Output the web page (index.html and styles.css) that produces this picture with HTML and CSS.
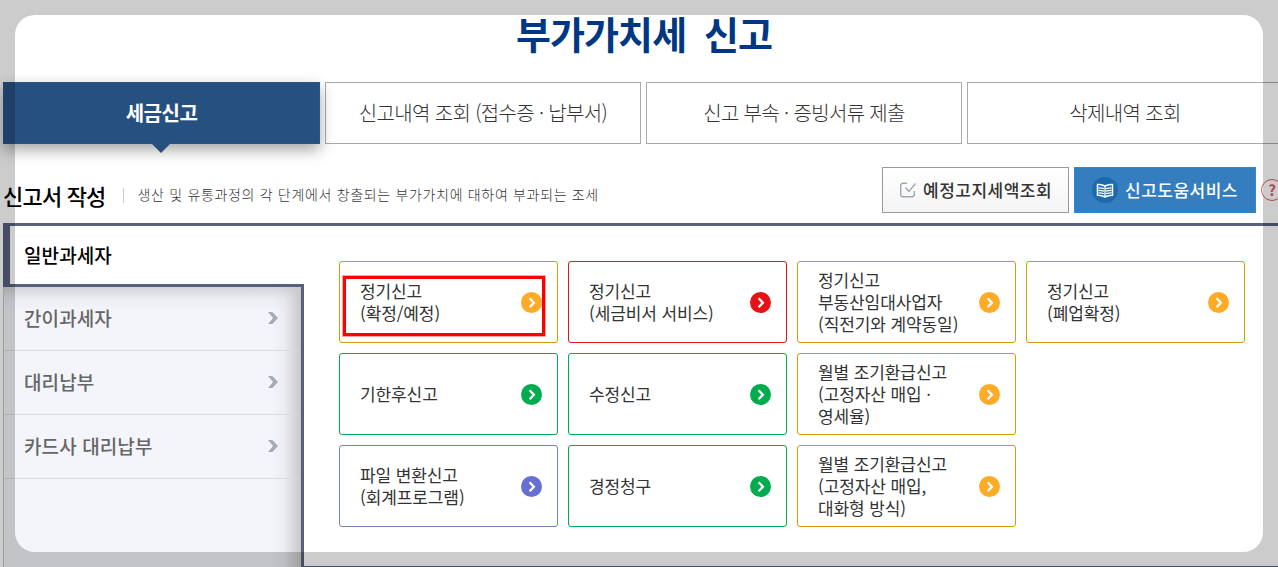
FILE: index.html
```html
<!DOCTYPE html>
<html lang="ko">
<head>
  <meta charset="UTF-8">
  <meta name="viewport" content="width=device-width, initial-scale=1.0">
  <title>부가가치세 신고</title>
  <link rel="stylesheet" href="styles.css">
</head>
<body>
  <svg class="hidden">
    <symbol id="go" viewBox="0 0 21 21">
      <circle cx="10.5" cy="10.5" r="10.5" fill="currentColor"/>
      <path d="M8.6 6.3l4.3 4.5-4.3 4.5" fill="none" stroke="#fff" stroke-width="2.3"/>
    </symbol>
    <symbol id="arrow" viewBox="0 0 10 12">
      <path d="M0 0h4.4L10 6l-5.6 6H0l5-6z" fill="currentColor"/>
    </symbol>
  </svg>

  <div class="page">
    <header>
      <h1>부가가치세 신고</h1>
    </header>

    <nav class="tabs">
      <a class="tab active">세금신고</a>
      <a class="tab">신고내역 조회 (접수증 · 납부서)</a>
      <a class="tab">신고 부속 · 증빙서류 제출</a>
      <a class="tab">삭제내역 조회</a>
    </nav>

    <div class="sub-header">
      <h2>신고서 작성</h2>
      <p>생산 및 유통과정의 각 단계에서 창출되는 부가가치에 대하여 부과되는 조세</p>
      <div class="buttons">
        <a class="btn">
          <svg class="check" width="16" height="16" viewBox="0 0 16 16" fill="none" stroke="#a0a7b2" stroke-width="1.4">
            <path d="M7 1.2H2.2L.7 2.700v10.600l1.500 1.500h10.600l1.500-1.500V9M5.500 5.500l3.500 4 6.400-8"/>
          </svg>
          <span>예정고지세액조회</span>
        </a>
        <a class="btn blue">
          <svg class="book" width="26" height="26" viewBox="0 0 26 26">
            <circle cx="13" cy="13" r="13" fill="#1a6aad"/>
            <path d="M5.500 7.500Q9.500 7 13 9q3.500-2 7.500-1.500v10.700Q16.500 18 13 20q-3.500-2-7.500-1.800z" fill="#1a6aad" stroke="#fff" stroke-width="1.5"/>
            <path d="M13 9v11M6.500 10.800q3 0 5.500.9M6.500 13.300q3 0 5.500.9M6.500 15.800q3 0 5.500.9M19.500 10.800q-3 0-5.500.9M19.500 13.300q-3 0-5.500.9M19.500 15.800q-3 0-5.500.9" fill="none" stroke="#fff" stroke-width="1.3"/>
          </svg>
          <span>신고도움서비스</span>
        </a>
        <span class="help">?</span>
      </div>
    </div>

    <main>
      <ul class="side">
        <li class="on">일반과세자</li>
        <li>간이과세자<svg><use href="#arrow"/></svg></li>
        <li>대리납부<svg><use href="#arrow"/></svg></li>
        <li>카드사 대리납부<svg><use href="#arrow"/></svg></li>
      </ul>
      <div class="cards">
        <a class="card yellow marked">정기신고<br>(확정/예정)<svg><use href="#go"/></svg></a>
        <a class="card red">정기신고<br>(세금비서 서비스)<svg><use href="#go"/></svg></a>
        <a class="card yellow">정기신고<br>부동산임대사업자<br>(직전기와 계약동일)<svg><use href="#go"/></svg></a>
        <a class="card yellow">정기신고<br>(폐업확정)<svg><use href="#go"/></svg></a>
        <a class="card green">기한후신고<svg><use href="#go"/></svg></a>
        <a class="card green">수정신고<svg><use href="#go"/></svg></a>
        <a class="card yellow">월별 조기환급신고<br>(고정자산 매입 ·<br>영세율)<svg><use href="#go"/></svg></a>
        <a class="card purple row-start">파일 변환신고<br>(회계프로그램)<svg><use href="#go"/></svg></a>
        <a class="card green">경정청구<svg><use href="#go"/></svg></a>
        <a class="card yellow">월별 조기환급신고<br>(고정자산 매입,<br>대화형 방식)<svg><use href="#go"/></svg></a>
      </div>
    </main>
  </div>
  <div class="frame"></div>
</body>
</html>
```
FILE: styles.css
```css
* {
  box-sizing: border-box;
}
body {
  margin: 0;
  height: 567px;
  overflow: hidden;
  background: #fff;
  color: #333;
  font-family: "Noto Sans CJK KR", sans-serif;
}
h1, h2, p, ul {
  margin: 0;
  padding: 0;
}
.hidden {
  display: none;
}
.page {
  width: 1283px;
  padding-left: 3px;
}

header {
  height: 82px;
  text-align: center;
}
h1 {
  padding: 4px 0 0 2px;
  font-size: 38px;
  line-height: 58px;
  letter-spacing: -0.9px;
  word-spacing: 8px;
  color: #003783;
}

.tabs {
  display: flex;
  gap: 5px;
  height: 62px;
}
.tab {
  flex: 1;
  border: 1px solid #aaa;
  text-align: center;
  font-size: 20px;
  font-weight: 300;
  line-height: 59px;
  letter-spacing: -0.65px;
}
.tab.active {
  position: relative;
  flex: 0 0 317px;
  border-color: #2b5486;
  background: #265080;
  color: #fff;
  font-weight: 700;
  letter-spacing: -0.5px;
  box-shadow: 0 6px 14px rgba(0, 0, 0, 0.35);
}
.tab.active::after {
  content: "";
  position: absolute;
  left: 50%;
  top: 100%;
  margin-left: -11px;
  border: 10px solid transparent;
  border-top-color: #265080;
  border-bottom: 0;
}

.sub-header {
  display: flex;
  height: 79px;
}
h2 {
  padding-top: 33px;
  font-size: 22px;
  font-weight: 500;
  line-height: 36px;
  letter-spacing: -0.8px;
  color: #000;
}
.sub-header p {
  height: 15px;
  margin: 44px 0 0 17px;
  padding-left: 14px;
  border-left: 1px solid #ccc;
  font-size: 14px;
  font-weight: 300;
  line-height: 13px;
  letter-spacing: 0.67px;
  color: #333;
}
.buttons {
  display: flex;
  gap: 5px;
  margin: 23px 0 0 auto;
}
.btn {
  display: flex;
  align-items: center;
  width: 187px;
  height: 46px;
  padding-left: 17px;
  border: 1px solid #999;
  background: linear-gradient(#fff, #f4f4f4);
  font-size: 17px;
  font-weight: 500;
  line-height: 44px;
  letter-spacing: 0.5px;
}
.check {
  margin-right: 7px;
}
.btn.blue {
  width: 182px;
  border-color: #3089cc;
  background: #347dbe;
  color: #fff;
}
.book {
  margin-right: 7px;
}
.help {
  width: 22px;
  height: 22px;
  margin-top: 12px;
  border: 1.5px solid #dd5a5e;
  border-radius: 50%;
  text-align: center;
  font-size: 15px;
  font-weight: 700;
  line-height: 19px;
  color: #dd5a5e;
}

main {
  display: flex;
  height: 344px;
  border-top: 3px solid #57617f;
}
.side {
  display: flex;
  flex-direction: column;
  width: 301px;
  list-style: none;
  border-left: 1px solid #c5c5c8;
  background:
    linear-gradient(#57617f, #57617f) 297px 58px / 3px 100% no-repeat,
    linear-gradient(to right, rgba(200, 200, 200, 0), rgba(200, 200, 200, 0.2) 45%, #c8c8c8) 268px 0 / 29px 100% no-repeat,
    linear-gradient(rgba(208, 208, 212, 0.9), rgba(225, 225, 230, 0.4) 50%, rgba(225, 225, 230, 0)) 0 61px / 100% 24px no-repeat,
    #f3f5fb;
}
.side li {
  display: flex;
  align-items: center;
  justify-content: space-between;
  height: 64px;
  margin-right: 5px;
  padding: 0 21px 2px 20px;
  border-bottom: 1px solid #dcdcdc;
  font-size: 19px;
  font-weight: 500;
  letter-spacing: 0.1px;
  color: #666;
}
.side svg {
  width: 10px;
  height: 12px;
  margin-top: 1px;
  color: #a5abb9;
}
.side .on {
  height: 61px;
  margin: 0 0 0 -1px;
  padding: 0 0 2px 14px;
  border-left: 7px solid #57617f;
  border-bottom: 3px solid #57617f;
  background: #fff;
  color: #000;
}

.cards {
  flex: 1;
  display: grid;
  grid-template-columns: repeat(4, 219px);
  grid-auto-rows: 82px;
  gap: 10px;
  align-content: start;
  padding: 35px;
  border-bottom: 1px solid #57617f;
}
.card {
  position: relative;
  display: block;
  align-content: center;
  padding-left: 20px;
  border: 1px solid currentColor;
  border-radius: 3px;
  font-size: 17px;
  font-weight: 400;
  line-height: 22px;
  letter-spacing: -0.1px;
  -webkit-text-fill-color: #333;
}
.card svg {
  position: absolute;
  top: 30px;
  right: 15px;
  width: 21px;
  height: 21px;
}
.row-start {
  grid-column: 1;
}
.yellow {
  border-color: #d49b12;
  color: #ffab25;
}
.red {
  color: #e51318;
}
.green {
  color: #00ac4e;
}
.purple {
  border-color: #7485ba;
  color: #6670d2;
}
/* highlight box over the first menu */
.marked::after {
  content: "";
  position: absolute;
  left: 3px;
  top: 14px;
  box-sizing: border-box;
  width: 202px;
  height: 60px;
  border: 3px solid #f00;
  box-shadow: 0 0 0 1px rgba(255, 0, 0, 0.35);
}

/* translucent border around the visible area */
.frame {
  position: fixed;
  inset: 15px;
  border-radius: 20px;
  box-shadow: 0 0 0 40px rgba(0, 0, 0, 0.2);
  pointer-events: none;
}
```
